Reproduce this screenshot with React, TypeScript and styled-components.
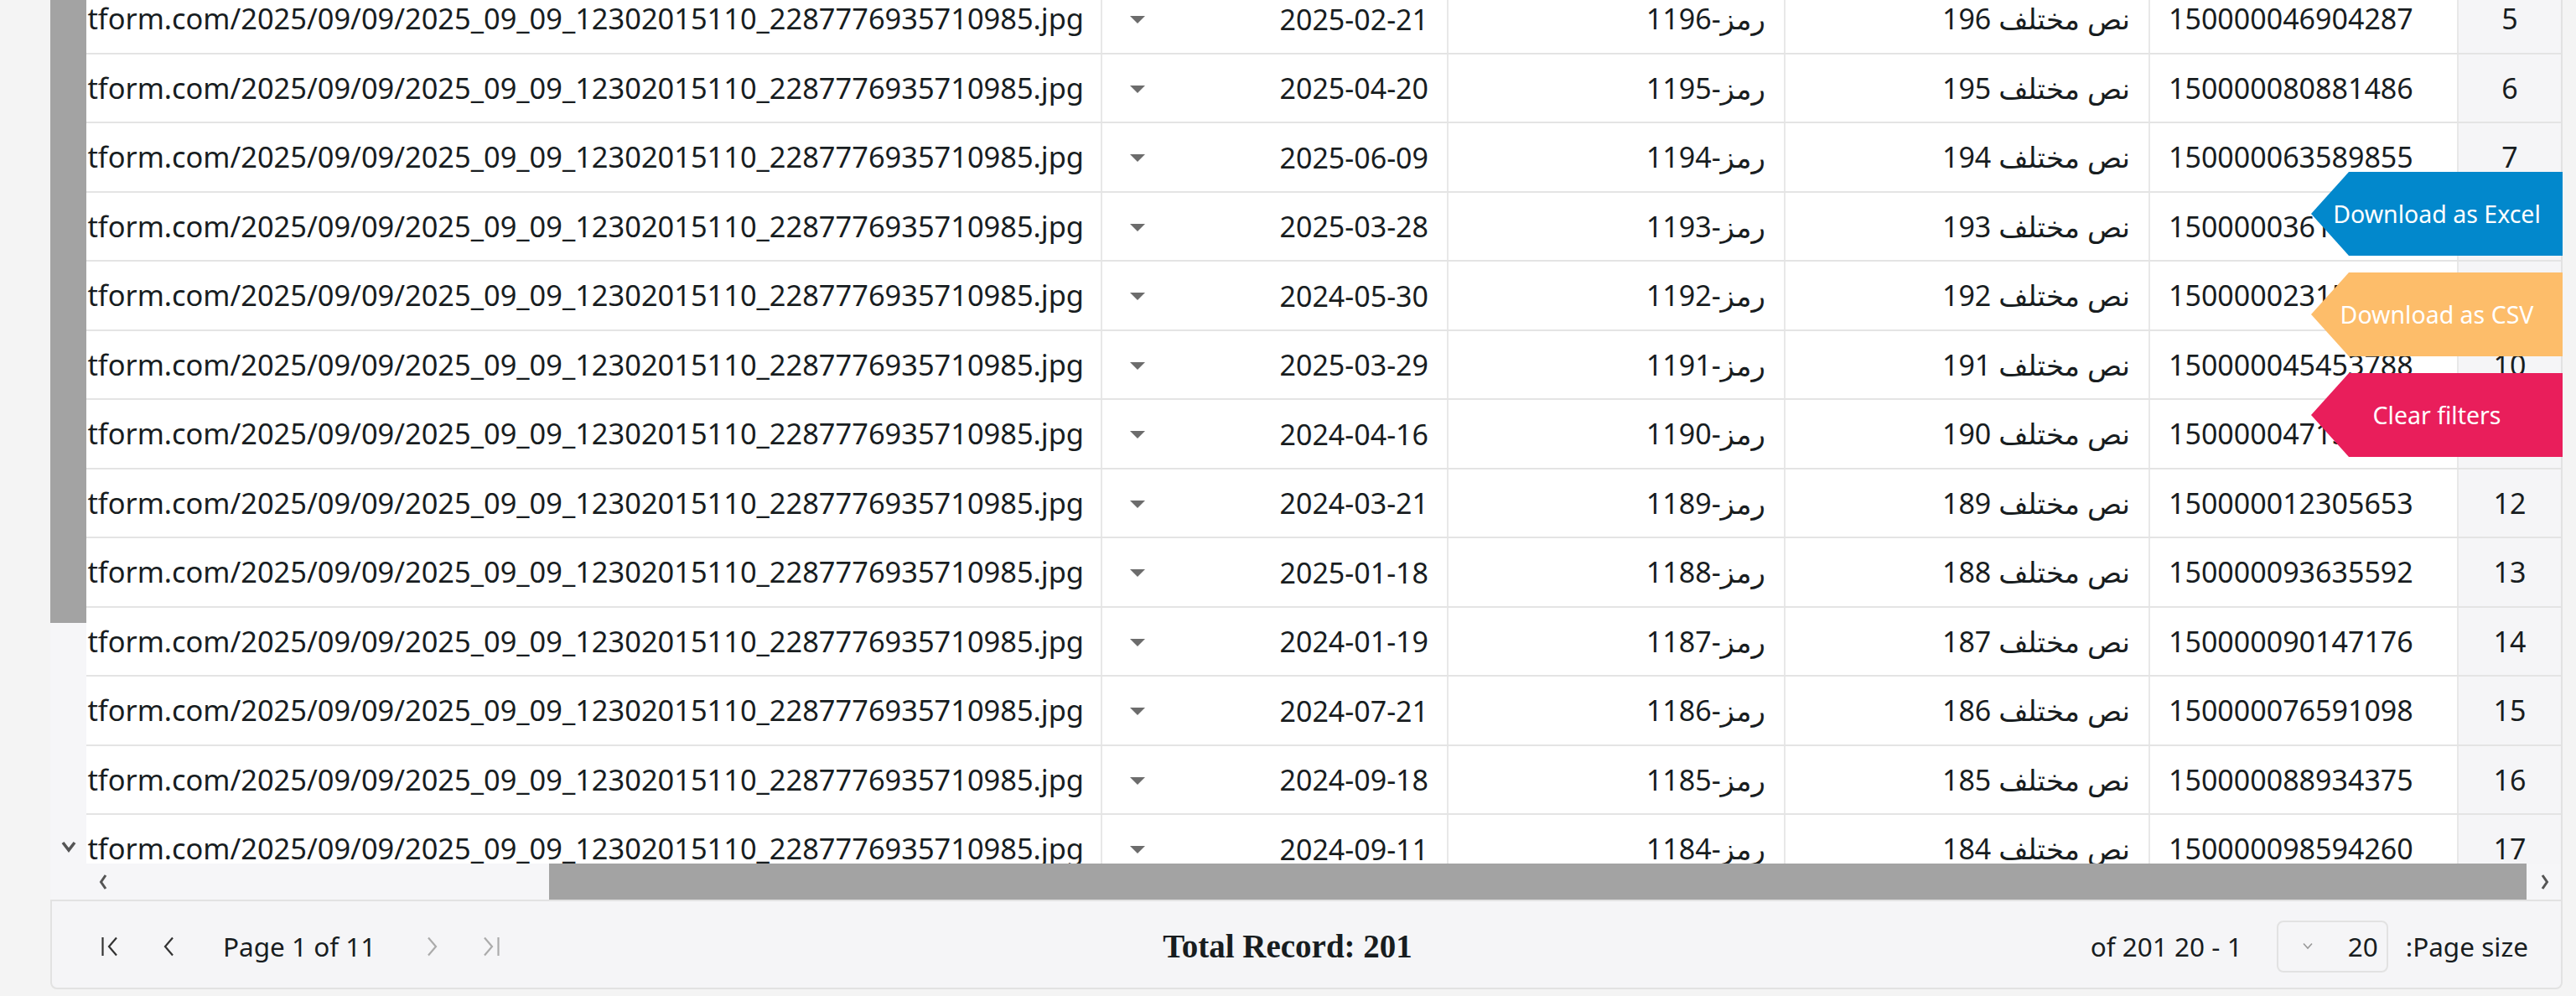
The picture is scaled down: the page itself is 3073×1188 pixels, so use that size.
import styled, { createGlobalStyle } from "styled-components";

const GlobalStyle = createGlobalStyle`
    html, body {
        margin: 0;
        padding: 0;
    }
    body {
        background: #f4f4f4;
        color: #181d1f;
        font-family: "Noto Sans", "DejaVu Sans", sans-serif;
        overflow: hidden;
    }
`;

const rows = [
    { n: 5, id: "150000046904287", k: 196, date: "2025-02-21" },
    { n: 6, id: "150000080881486", k: 195, date: "2025-04-20" },
    { n: 7, id: "150000063589855", k: 194, date: "2025-06-09" },
    { n: 8, id: "150000036172941", k: 193, date: "2025-03-28" },
    { n: 9, id: "150000023158430", k: 192, date: "2024-05-30" },
    { n: 10, id: "150000045453788", k: 191, date: "2025-03-29" },
    { n: 11, id: "150000047153602", k: 190, date: "2024-04-16" },
    { n: 12, id: "150000012305653", k: 189, date: "2024-03-21" },
    { n: 13, id: "150000093635592", k: 188, date: "2025-01-18" },
    { n: 14, id: "150000090147176", k: 187, date: "2024-01-19" },
    { n: 15, id: "150000076591098", k: 186, date: "2024-07-21" },
    { n: 16, id: "150000088934375", k: 185, date: "2024-09-18" },
    { n: 17, id: "150000098594260", k: 184, date: "2024-09-11" },
];

const fileUrl = "https://files.cdn-platform.com/2025/09/09/2025_09_09_12302015110_2287776935710985.jpg";

const Page = styled.div`
    box-sizing: border-box;
    display: flex;
    flex-direction: column;
    height: 1188px;
    padding: 0 16px 8px 60px;
    position: relative;
    width: 3073px;
`;

const GridBody = styled.div`
    background: #fff;
    border-right: 2px solid #e2e2e2;
    display: flex;
    height: 1073px;
`;

const VScroll = styled.div`
    background: #f6f6f8;
    display: flex;
    flex: none;
    flex-direction: column;
    width: 43px;
`;

const VThumb = styled.div`
    background: #a3a3a3;
    height: 743px;
`;

const VTrack = styled.div`
    flex: 1;
`;

const ArrowBox = styled.div<{ $w?: number; $h?: number }>`
    align-items: center;
    display: flex;
    flex: none;
    height: ${(p) => p.$h ?? 40}px;
    justify-content: center;
    width: ${(p) => p.$w ?? 43}px;
`;

const Corner = styled.div`
    height: 43px;
`;

const Main = styled.div`
    display: flex;
    flex: 1;
    flex-direction: column;
    min-width: 0;
`;

const Viewport = styled.div`
    direction: rtl;
    height: 1030px;
    overflow: hidden;
`;

const Rows = styled.div`
    margin-top: -18px;
`;

const Row = styled.div`
    border-bottom: 2px solid #e4e4e4;
    box-sizing: border-box;
    display: flex;
    font-size: 34px;
    height: 82.5px;
`;

const Cell = styled.div<{ $w?: number; $align?: string }>`
    border-left: 2px solid #e8e8e8;
    box-sizing: border-box;
    flex: ${(p) => (p.$w ? `none` : `1`)};
    line-height: 78.5px;
    min-width: 0;
    overflow: hidden;
    padding: 1px 22px 0;
    text-align: ${(p) => p.$align ?? "right"};
    white-space: nowrap;
    width: ${(p) => (p.$w ? `${p.$w}px` : "auto")};
`;

const NumCell = styled(Cell)`
    background: #f5f5f7;
`;

const UrlCell = styled(Cell)`
    border-left: none;
    font-size: 34.4px;
    padding-right: 20px;
`;

const DateCell = styled(Cell)`
    align-items: center;
    display: flex;
    justify-content: space-between;
`;

const Caret = styled.span`
    border-left: 9px solid transparent;
    border-right: 9px solid transparent;
    border-top: 9px solid #6c6c6c;
    height: 0;
    margin-left: 11px;
    margin-top: 2px;
    width: 0;
`;

const HScroll = styled.div`
    align-items: center;
    background: #f6f6f8;
    display: flex;
    height: 43px;
`;

const HTrack = styled.div`
    display: flex;
    flex: 1;
    height: 100%;
`;

const HThumb = styled.div`
    background: #a3a3a3;
    margin: 0 3px 0 auto;
    width: 2359px;
`;

const Panel = styled.div`
    align-items: center;
    background: #f5f5f7;
    border: 2px solid #e2e2e2;
    border-radius: 0 0 8px 8px;
    box-sizing: border-box;
    direction: rtl;
    display: flex;
    font-size: 31.5px;
    height: 107px;
    padding: 4px 39px 0 46px;
`;

const PageSize = styled.div`
    align-items: center;
    display: flex;
    gap: 21px;
`;

const Select = styled.div`
    align-items: center;
    border: 2px solid #e2e2e2;
    border-radius: 8px;
    box-sizing: border-box;
    display: flex;
    height: 62px;
    justify-content: space-between;
    padding: 0 10px 0 28px;
    width: 133px;
`;

const Summary = styled.div`
    margin-right: 41px;
`;

const Total = styled.h3`
    flex: 1;
    font-family: "Liberation Serif", serif;
    font-size: 39px;
    font-weight: 700;
    margin: 0 31px 0 0;
    text-align: center;
`;

const Nav = styled.div`
    align-items: center;
    display: flex;
    gap: 19px;
`;

const NavButton = styled.button<{ $disabled?: boolean }>`
    align-items: center;
    background: none;
    border: none;
    color: ${(p) => (p.$disabled ? "#ababab" : "#333")};
    display: flex;
    height: 40px;
    justify-content: center;
    padding: 0;
    width: 48px;
`;

const PageText = styled.span`
    margin: 0 27px 0 24px;
`;

const Actions = styled.div`
    display: flex;
    flex-direction: column;
    gap: 20px;
    position: absolute;
    right: 16px;
    top: 205px;
`;

const ActionButton = styled.button<{ $bg: string }>`
    background: ${(p) => p.$bg};
    border: none;
    clip-path: polygon(45px 0, 100% 0, 100% 100%, 45px 100%, 0 50%);
    color: #fff;
    font-family: "Noto Sans", sans-serif;
    font-size: 28.5px;
    height: 100px;
    padding: 0;
    width: 300px;
`;

function Chevron({ dir, bar, size = 24 }: { dir: "left" | "right"; bar?: boolean; size?: number }) {
    const d = dir === "left" ? "M19 1.5 L10 12 L19 22.5" : "M5 1.5 L14 12 L5 22.5";
    return (
        <svg width={size} height={size} viewBox="0 0 24 24" fill="none" stroke="currentColor" strokeWidth="2.2">
            <path d={d} />
            {bar && <path d={dir === "left" ? "M2.5 1 V23" : "M21.5 1 V23"} />}
        </svg>
    );
}

export default function App() {
    return (
        <>
            <GlobalStyle />
            <Page>
                <GridBody>
                    <VScroll>
                        <VThumb />
                        <VTrack />
                        <ArrowBox>
                            <svg width="20" height="16" viewBox="0 0 20 16" fill="none" stroke="#555" strokeWidth="3.6">
                                <path d="M3 3 L10 12 L17 3" />
                            </svg>
                        </ArrowBox>
                        <Corner />
                    </VScroll>
                    <Main>
                        <Viewport>
                            <Rows>
                                {rows.map((r) => (
                                    <Row key={r.n}>
                                        <NumCell $w={124} $align="center">{r.n}</NumCell>
                                        <Cell $w={368} $align="left">{r.id}</Cell>
                                        <Cell $w={435}>{`نص مختلف ${r.k}`}</Cell>
                                        <Cell $w={402}>{`رمز-${r.k + 1000}`}</Cell>
                                        <DateCell $w={413}>
                                            <span>{r.date}</span>
                                            <Caret />
                                        </DateCell>
                                        <UrlCell>{fileUrl}</UrlCell>
                                    </Row>
                                ))}
                            </Rows>
                        </Viewport>
                        <HScroll>
                            <ArrowBox $w={40} $h={43}>
                                <svg width="10" height="20" viewBox="0 0 10 20" fill="none" stroke="#555" strokeWidth="3">
                                    <path d="M8 2 L2.5 10 L8 18" />
                                </svg>
                            </ArrowBox>
                            <HTrack>
                                <HThumb />
                            </HTrack>
                            <ArrowBox $w={38} $h={43}>
                                <svg width="10" height="20" viewBox="0 0 10 20" fill="none" stroke="#555" strokeWidth="3">
                                    <path d="M2 2 L7.5 10 L2 18" />
                                </svg>
                            </ArrowBox>
                        </HScroll>
                    </Main>
                </GridBody>
                <Panel>
                    <PageSize>
                        <span>Page size:</span>
                        <Select>
                            <span>20</span>
                            <svg width="14" height="9" viewBox="0 0 14 9" fill="none" stroke="#999" strokeWidth="1.6">
                                <path d="M2 1.5 L7 7 L12 1.5" />
                            </svg>
                        </Select>
                    </PageSize>
                    <Summary>1 - 20 of 201</Summary>
                    <Total>Total Record: 201</Total>
                    <Nav>
                        <NavButton $disabled title="First page">
                            <Chevron dir="right" bar />
                        </NavButton>
                        <NavButton $disabled title="Previous page">
                            <Chevron dir="right" />
                        </NavButton>
                        <PageText>Page 1 of 11</PageText>
                        <NavButton title="Next page">
                            <Chevron dir="left" />
                        </NavButton>
                        <NavButton title="Last page">
                            <Chevron dir="left" bar />
                        </NavButton>
                    </Nav>
                </Panel>
                <Actions>
                    <ActionButton $bg="#0288cc">Download as Excel</ActionButton>
                    <ActionButton $bg="#fdbd6a">Download as CSV</ActionButton>
                    <ActionButton $bg="#e91e5b">Clear filters</ActionButton>
                </Actions>
            </Page>
        </>
    );
}
